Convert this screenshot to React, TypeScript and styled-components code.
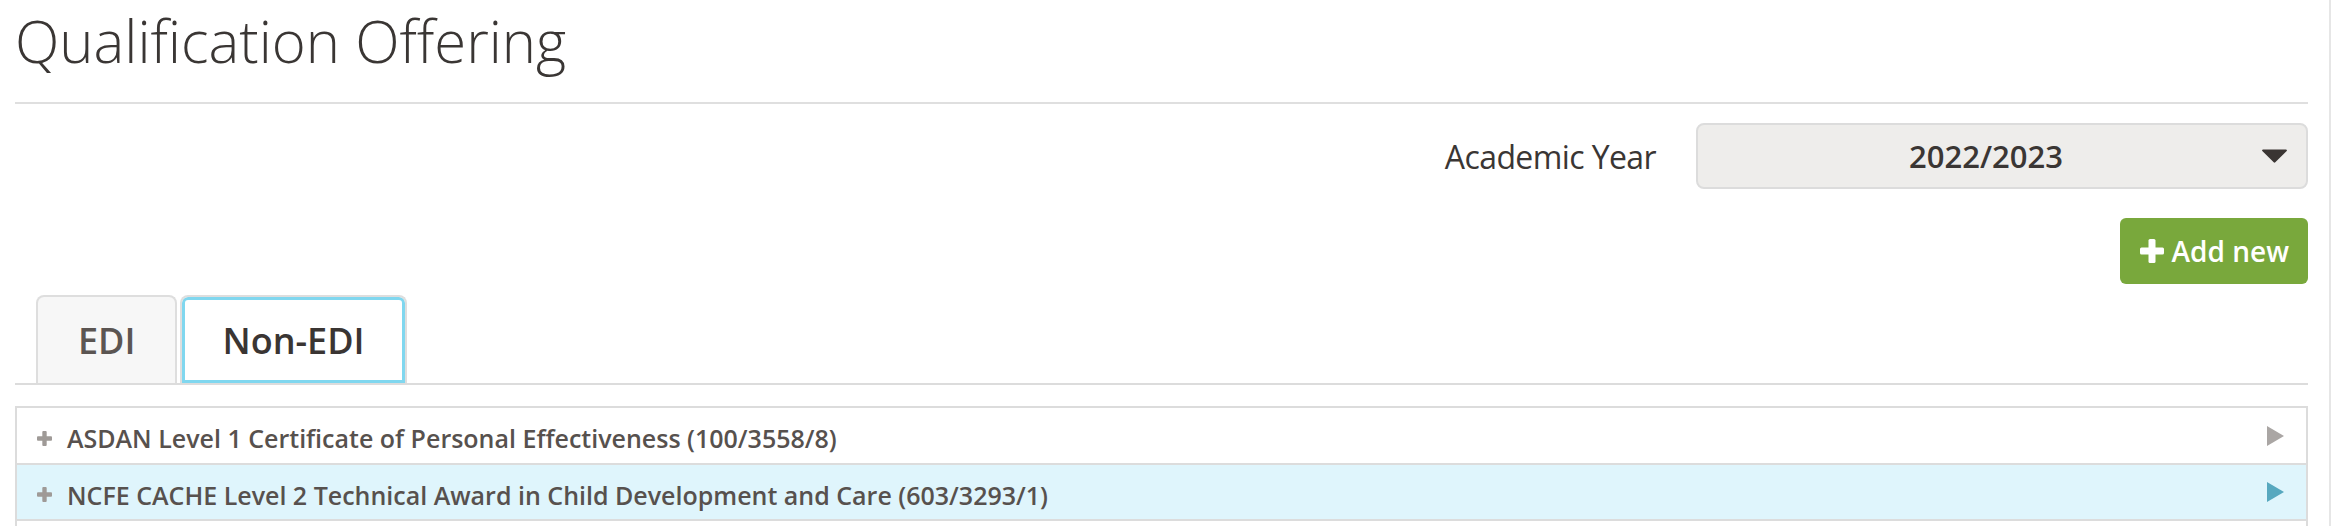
import React from "react";
import styled, { createGlobalStyle } from "styled-components";

const GlobalStyle = createGlobalStyle`
  html, body { margin: 0; padding: 0; background: #ffffff; }
  body { font-family: "Open Sans", "Noto Sans", sans-serif; color: #3a3634; }
  *, *::before, *::after { box-sizing: border-box; }
`;

const Page = styled.div`
  display: flex;
  align-items: flex-start;
  height: 526px;
  overflow: hidden;
  padding-right: 3px;
`;

const Main = styled.main`
  flex: 1;
  min-height: 100%;
  padding: 0 21px 0 15px;
  border-right: 2px solid #e6e6e6;
`;

const Header = styled.header`
  height: 104px;
  border-bottom: 2px solid #dfdfdf;
`;

const Title = styled.h1`
  margin: 0;
  padding-top: 8px;
  font-weight: 300;
  font-size: 58px;
  line-height: 66px;
  color: #3a3634;
`;

const FilterRow = styled.div`
  margin-top: 19px;
  display: flex;
  justify-content: flex-end;
  align-items: center;
  gap: 40px;
`;

const FilterLabel = styled.label`
  font-size: 32px;
  font-weight: 400;
  letter-spacing: -0.6px;
  color: #3a3634;
`;

const Select = styled.div`
  width: 612px;
  height: 66px;
  display: flex;
  align-items: center;
  border: 2px solid #dcdcdc;
  border-radius: 8px;
  background: #eeedeb;
`;

const SelectValue = styled.span`
  flex: 1;
  padding-left: 12px;
  text-align: center;
  font-size: 31px;
  font-weight: 600;
  color: #3a3634;
`;

const Caret = styled.svg`
  margin-right: 19px;
  flex: none;
`;

const ButtonRow = styled.div`
  margin-top: 29px;
  display: flex;
  justify-content: flex-end;
`;

const AddButton = styled.button`
  height: 66px;
  display: flex;
  align-items: center;
  gap: 8px;
  padding: 0 19px 0 20px;
  border: none;
  border-radius: 6px;
  background: #79a83c;
  color: #ffffff;
  font-family: inherit;
  font-size: 28px;
  font-weight: 600;
`;

const TabList = styled.div`
  margin-top: 11px;
  display: flex;
  gap: 3px;
  padding-left: 21px;
  border-bottom: 2px solid #dcdcdc;
`;

const Tab = styled.div<{ $active?: boolean }>`
  height: 88px;
  display: flex;
  align-items: center;
  padding: 1px 40px 0;
  border: 2px solid #dedede;
  border-bottom: none;
  border-radius: 8px 8px 0 0;
  font-size: 36px;
  font-weight: 600;
  background: ${(p) => (p.$active ? "#ffffff" : "#f7f7f7")};
  color: ${(p) => (p.$active ? "#3a3533" : "#5b5552")};
  box-shadow: ${(p) => (p.$active ? "inset 0 0 0 3px #80d7ef" : "none")};
`;

const Table = styled.div`
  margin-top: 21px;
  border: 2px solid #dcdcdc;
  border-bottom: none;
`;

const Row = styled.div<{ $highlight?: boolean }>`
  height: 55px;
  display: flex;
  align-items: center;
  padding: 0 22px 0 20px;
  background: ${(p) => (p.$highlight ? "#dff5fc" : "#ffffff")};
  & + & {
    height: 56px;
    border-top: 2px solid #dcdcdc;
  }
`;

const RowText = styled.span`
  margin-top: 5px;
  font-size: 25px;
  font-weight: 600;
  color: #57514e;
  display: flex;
  align-items: center;
  gap: 15px;
`;

const Toggle = styled.svg`
  flex: none;
`;

const Expand = styled.svg`
  margin-left: auto;
  flex: none;
`;

const PlusIcon = ({ size, color, bar }: { size: number; color: string; bar: number }) => (
  <Toggle width={size} height={size} viewBox="0 0 24 24">
    <rect x={12 - bar / 2} y="0" width={bar} height="24" rx="1.5" fill={color} />
    <rect x="0" y={12 - bar / 2} width="24" height={bar} rx="1.5" fill={color} />
  </Toggle>
);

const rows = [
  { label: "ASDAN Level 1 Certificate of Personal Effectiveness (100/3558/8)", highlight: false },
  { label: "NCFE CACHE Level 2 Technical Award in Child Development and Care (603/3293/1)", highlight: true },
];

export default function App() {
  return (
    <>
      <GlobalStyle />
      <Page>
        <Main>
          <Header>
            <Title>Qualification Offering</Title>
          </Header>
          <FilterRow>
            <FilterLabel>Academic Year</FilterLabel>
            <Select>
              <SelectValue>2022/2023</SelectValue>
              <Caret width="25" height="14" viewBox="0 0 25 14">
                <path d="M1 0.5 H24 a1 1 0 0 1 0.7 1.6 L13.3 13.3 a1.2 1.2 0 0 1 -1.6 0 L0.3 2.1 A1 1 0 0 1 1 0.5 Z" fill="#3a3533" />
              </Caret>
            </Select>
          </FilterRow>
          <ButtonRow>
            <AddButton>
              <PlusIcon size={24} color="#ffffff" bar={7} />
              Add new
            </AddButton>
          </ButtonRow>
          <TabList>
            <Tab>EDI</Tab>
            <Tab $active>Non-EDI</Tab>
          </TabList>
          <Table>
            {rows.map((r) => (
              <Row key={r.label} $highlight={r.highlight}>
                <RowText>
                  <PlusIcon size={15} color="#9f9a97" bar={7} />
                  {r.label}
                </RowText>
                <Expand width="17" height="20" viewBox="0 0 17 20">
                  <path d="M0 0 L17 10 L0 20 Z" fill={r.highlight ? "#57a8bf" : "#aaa6a4"} />
                </Expand>
              </Row>
            ))}
            <Row />
          </Table>
        </Main>
      </Page>
    </>
  );
}
